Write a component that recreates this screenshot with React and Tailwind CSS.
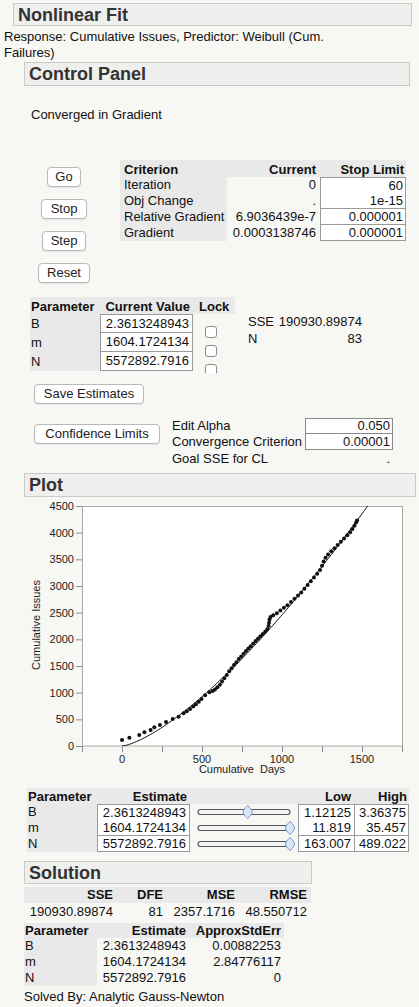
import React from "react";

const FONT = "font-['Liberation_Sans',Arial,Helvetica,sans-serif]";

// points read off the reference plot (days, issues)
const POINTS = [
  [0, 112], [46, 156], [108, 206], [140, 256], [179, 300], [202, 350], [237, 394],
  [275, 450], [317, 506], [354, 550], [385, 612], [405, 650], [425, 695], [445, 740],
  [462, 785], [480, 830], [497, 880], [519, 950], [546, 1010], [566, 1030], [581, 1060],
  [596, 1100], [612, 1150], [625, 1210], [640, 1270], [655, 1330], [670, 1400],
  [685, 1460], [700, 1520], [715, 1570], [730, 1630], [745, 1680], [760, 1730],
  [775, 1780], [790, 1830], [805, 1870], [820, 1920], [835, 1970], [850, 2010],
  [865, 2060], [880, 2100], [895, 2140], [908, 2190], [916, 2250], [919, 2310],
  [922, 2370], [928, 2420], [945, 2450], [968, 2490], [990, 2540], [1012, 2590],
  [1034, 2640], [1056, 2700], [1078, 2760], [1100, 2820], [1120, 2880], [1140, 2950],
  [1160, 3020], [1180, 3090], [1200, 3160], [1220, 3230], [1238, 3300], [1250, 3380],
  [1260, 3460], [1272, 3530], [1288, 3590], [1308, 3650], [1328, 3710], [1348, 3770],
  [1368, 3830], [1388, 3890], [1408, 3950], [1426, 4010], [1440, 4070], [1453, 4130],
  [1463, 4190], [1469, 4230],
];

function SectionHeader({ title, className = "" }) {
  return (
    <div
      className={`border border-[#cacaca] bg-[#efefed] pl-[4px] text-[18px] font-bold leading-[22px] text-[#333] ${className}`}
    >
      {title}
    </div>
  );
}

function Btn({ children, className = "" }) {
  return (
    <button
      className={`h-[20px] rounded-[4px] border border-[#b9b9b9] bg-white text-center text-[13px] leading-[18px] text-[#222] shadow-[0_1px_1px_rgba(0,0,0,0.08)] ${className}`}
    >
      {children}
    </button>
  );
}

function Slider({ pos }) {
  // pos: 0..1 along the track
  const cx = 8 + pos * 92;
  return (
    <svg width="108" height="16" className="block">
      <rect x="8" y="5.5" width="92" height="5" rx="2.5" fill="#f5f5f5" stroke="#555" strokeWidth="1.2" />
      <path
        d={`M${cx} 1.5 C${cx + 2.5} 4 ${cx + 4.5} 6 ${cx + 4.5} 8 C${cx + 4.5} 10 ${cx + 2.5} 12 ${cx} 14.5 C${cx - 2.5} 12 ${cx - 4.5} 10 ${cx - 4.5} 8 C${cx - 4.5} 6 ${cx - 2.5} 4 ${cx} 1.5 Z`}
        fill="#dbe8f5"
        stroke="#6f97c6"
        strokeWidth="1"
      />
    </svg>
  );
}

function Plot() {
  const X = (t) => 122 + t * 0.16;
  const Y = (v) => 249 - v / 18.75;
  const b = 1.41;
  const a = 925 / Math.pow(500, b);
  const curve = [];
  for (let t = 0; t <= 1570; t += 10) {
    curve.push(`${X(t).toFixed(1)},${Y(a * Math.pow(t, b)).toFixed(1)}`);
  }
  const yTicks = [0, 500, 1000, 1500, 2000, 2500, 3000, 3500, 4000, 4500];
  const xTicks = [-250, 0, 250, 500, 750, 1000, 1250, 1500, 1750];

  return (
    <svg width="419" height="283" className="block" fontSize="11" fill="#222">
      <defs>
        <clipPath id="frame">
          <rect x="82" y="9" width="321" height="240" />
        </clipPath>
      </defs>
      <rect x="82.5" y="9.5" width="320" height="239.5" fill="#fff" stroke="#a9a9a9" />
      {yTicks.map((v) => (
        <g key={v}>
          <line x1="76" x2="82" y1={Y(v) + 0.5} y2={Y(v) + 0.5} stroke="#8a8a8a" />
          <text x="74" y={Y(v) + 4} textAnchor="end">
            {v}
          </text>
        </g>
      ))}
      {xTicks.map((t) => (
        <line key={t} x1={X(t) + 0.5} x2={X(t) + 0.5} y1="249" y2="255" stroke="#8a8a8a" />
      ))}
      {[0, 500, 1000, 1500].map((t) => (
        <text key={t} x={X(t)} y="266" textAnchor="middle">
          {t}
        </text>
      ))}
      <text x="242" y="276" textAnchor="middle" className="whitespace-pre">
        Cumulative  Days
      </text>
      <text x="40" y="128" textAnchor="middle" transform="rotate(-90 40 128)">
        Cumulative Issues
      </text>
      <g clipPath="url(#frame)">
        <polyline points={curve.join(" ")} fill="none" stroke="#111" strokeWidth="1" />
        {POINTS.map(([t, v], i) => (
          <circle key={i} cx={X(t)} cy={Y(v)} r="2" fill="#111" />
        ))}
      </g>
    </svg>
  );
}

export default function App() {
  const criteria = [
    ["Iteration", "0", "60"],
    ["Obj Change", ".", "1e-15"],
    ["Relative Gradient", "6.9036439e-7", "0.000001"],
    ["Gradient", "0.0003138746", "0.000001"],
  ];
  const params = [
    ["B", "2.3613248943"],
    ["m", "1604.1724134"],
    ["N", "5572892.7916"],
  ];
  const limits = [
    ["B", "2.3613248943", 0.54, "1.12125", "3.36375"],
    ["m", "1604.1724134", 1, "11.819", "35.457"],
    ["N", "5572892.7916", 1, "163.007", "489.022"],
  ];
  const solution = [
    ["B", "2.3613248943", "0.00882253"],
    ["m", "1604.1724134", "2.84776117"],
    ["N", "5572892.7916", "0"],
  ];

  return (
    <div className={`${FONT} min-h-[1007px] w-[419px] bg-[#f7f7f3] pt-[3px] text-[13px] leading-[16px] text-[#111]`}>
      <SectionHeader title="Nonlinear Fit" className="ml-[13px] mr-[7px] h-[23px]" />
      <p className="mt-[3px] w-[345px] pl-[4px]">
        Response: Cumulative Issues, Predictor: Weibull (Cum. Failures)
      </p>
      <SectionHeader title="Control Panel" className="ml-[24px] mr-[9px] mt-[1px] h-[24px]" />
      <p className="mt-[21px] pl-[31px]">Converged in Gradient</p>

      {/* buttons + criterion table */}
      <div className="mt-[37px] flex items-start">
        <div className="flex w-[120px] flex-col items-center gap-[12px] pl-[8px] pt-[7px]">
          <Btn className="w-[34px]">Go</Btn>
          <Btn className="w-[46px]">Stop</Btn>
          <Btn className="w-[44px]">Step</Btn>
          <Btn className="w-[52px]">Reset</Btn>
        </div>
        <div className="w-[286px]">
          <div className="grid h-[17px] grid-cols-[107px_93px_86px] bg-[#e9e9e9] pt-[3px] font-bold leading-[14px]">
            <span className="pl-[4px]">Criterion</span>
            <span className="pr-[4px] text-right">Current</span>
            <span className="pr-[2px] text-right">Stop Limit</span>
          </div>
          {criteria.map(([name, cur, lim], i) => (
            <div key={name} className="grid h-[16px] grid-cols-[107px_93px_86px]">
              <span className="bg-[#e9e9e9] pl-[4px]">{name}</span>
              <span className="pr-[4px] text-right">{cur}</span>
              <span
                className={`border-x border-b border-[#9a9a9a] bg-white pr-[2px] text-right leading-[15px] ${i === 0 ? "border-t" : ""}`}
              >
                {lim}
              </span>
            </div>
          ))}
        </div>
      </div>

      {/* parameter table + SSE */}
      <div className="ml-[30px] mt-[14px] flex items-start">
        <div className="w-[205px]">
          <div className="grid h-[17px] grid-cols-[70px_93px_42px] bg-[#e9e9e9] pt-[3px] font-bold leading-[14px]">
            <span className="pl-[1px]">Parameter</span>
            <span className="pr-[3px] text-right">Current Value</span>
            <span className="pl-[6px]">Lock</span>
          </div>
          <div className="flex">
            <div className="w-[70px]">
              {params.map(([p]) => (
                <div key={p} className="h-[19px] bg-[#e9e9e9] pl-[1px] leading-[19px]">
                  {p}
                </div>
              ))}
            </div>
            <div className="w-[93px]">
              {params.map(([p, v], i) => (
                <div
                  key={p}
                  className={`h-[19px] border-x border-b border-[#9a9a9a] bg-white pr-[3px] text-right leading-[18px] ${i === 0 ? "border-t" : ""}`}
                >
                  {v}
                </div>
              ))}
            </div>
            <div className="flex h-[59px] w-[42px] flex-col gap-[7px] overflow-hidden pl-[12px] pt-[12px]">
              {params.map(([p]) => (
                <div key={p} className="h-[12px] w-[12px] shrink-0 rounded-[3px] border border-[#8c8c8c] bg-white" />
              ))}
            </div>
          </div>
        </div>
        <div className="ml-[13px] mt-[16px] w-[114px] leading-[17px]">
          <div className="flex justify-between">
            <span>SSE</span>
            <span>190930.89874</span>
          </div>
          <div className="flex justify-between">
            <span>N</span>
            <span>83</span>
          </div>
        </div>
      </div>

      <Btn className="ml-[34px] mt-[11px] block w-[110px]">Save Estimates</Btn>

      {/* confidence limits */}
      <div className="mt-[14px] flex items-start">
        <Btn className="ml-[34px] mt-[6px] w-[126px]">Confidence Limits</Btn>
        <div className="ml-[12px]">
          <div className="flex h-[16px]">
            <span className="w-[133px]">Edit Alpha</span>
            <span className="w-[88px] border border-[#8a8a8a] bg-white pr-[2px] text-right leading-[14px]">0.050</span>
          </div>
          <div className="flex h-[16px]">
            <span className="w-[133px]">Convergence Criterion</span>
            <span className="w-[88px] border-x border-b border-[#8a8a8a] bg-white pr-[2px] text-right leading-[15px]">
              0.00001
            </span>
          </div>
          <div className="flex h-[16px] leading-[18px]">
            <span className="w-[133px]">Goal SSE for CL</span>
            <span className="w-[88px] pr-[3px] text-right">.</span>
          </div>
        </div>
      </div>

      <SectionHeader title="Plot" className="ml-[24px] mt-[7px] h-[24px] w-[392px]" />
      <Plot />

      {/* parameter limits with sliders */}
      <div className="ml-[27px] mt-[8px] w-[382px]">
        <div className="grid h-[16px] grid-cols-[70px_93px_108px_57px_54px] bg-[#e9e9e9] font-bold leading-[17px]">
          <span className="pl-[1px]">Parameter</span>
          <span className="pr-[3px] text-right">Estimate</span>
          <span />
          <span className="pr-[4px] text-right">Low</span>
          <span className="pr-[2px] text-right">High</span>
        </div>
        {limits.map(([p, est, pos, lo, hi], i) => (
          <div key={p} className="grid h-[16px] grid-cols-[70px_93px_108px_57px_54px]">
            <span className="bg-[#e9e9e9] pl-[1px]">{p}</span>
            <span
              className={`border-x border-b border-[#9a9a9a] bg-white pr-[3px] text-right leading-[15px] ${i === 0 ? "border-t" : ""}`}
            >
              {est}
            </span>
            <Slider pos={pos} />
            <span
              className={`border-x border-b border-[#9a9a9a] bg-white pr-[3px] text-right leading-[15px] ${i === 0 ? "border-t" : ""}`}
            >
              {lo}
            </span>
            <span
              className={`border-r border-b border-[#9a9a9a] bg-white pr-[2px] text-right leading-[15px] ${i === 0 ? "border-t" : ""}`}
            >
              {hi}
            </span>
          </div>
        ))}
      </div>

      <SectionHeader title="Solution" className="ml-[24px] mt-[9px] h-[23px] w-[288px]" />

      <div className="ml-[24px] mt-[3px] w-[287px]">
        <div className="grid h-[16px] grid-cols-[92px_50px_72px_73px] bg-[#e9e9e9] text-right font-bold leading-[16px]">
          <span className="pr-[3px]">SSE</span>
          <span className="pr-[3px]">DFE</span>
          <span className="pr-[3px]">MSE</span>
          <span className="pr-[4px]">RMSE</span>
        </div>
        <div className="grid h-[17px] grid-cols-[92px_50px_72px_73px] text-right leading-[17px]">
          <span className="pr-[3px]">190930.89874</span>
          <span className="pr-[3px]">81</span>
          <span className="pr-[3px]">2357.1716</span>
          <span className="pr-[4px]">48.550712</span>
        </div>
      </div>

      <div className="ml-[24px] mt-[3px] w-[260px]">
        <div className="grid h-[15px] grid-cols-[73px_92px_95px] bg-[#e9e9e9] font-bold leading-[15px]">
          <span className="pl-[1px]">Parameter</span>
          <span className="pr-[3px] text-right">Estimate</span>
          <span className="pr-[3px] text-right">ApproxStdErr</span>
        </div>
        {solution.map(([p, est, se]) => (
          <div key={p} className="grid h-[16px] grid-cols-[73px_92px_95px]">
            <span className="bg-[#e9e9e9] pl-[1px]">{p}</span>
            <span className="pr-[3px] text-right">{est}</span>
            <span className="pr-[3px] text-right">{se}</span>
          </div>
        ))}
      </div>

      <p className="mt-[3px] pl-[24px]">Solved By: Analytic Gauss-Newton</p>
    </div>
  );
}
